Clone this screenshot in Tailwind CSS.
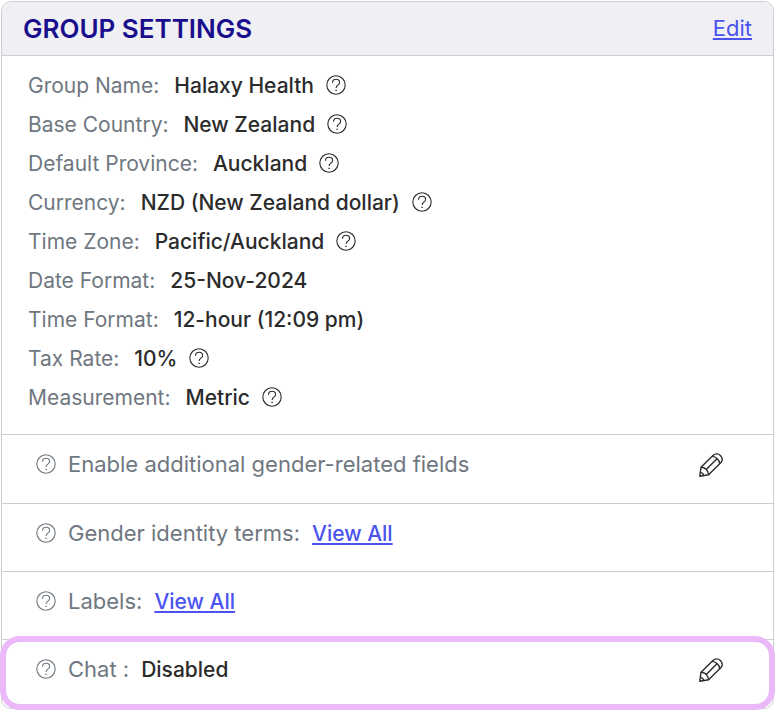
<!DOCTYPE html>
<html lang="en">
<head>
  <meta charset="UTF-8" />
  <meta name="viewport" content="width=device-width, initial-scale=1.0"/>
  <title>Group Settings</title>
  <script src="https://cdn.jsdelivr.net/npm/@tailwindcss/browser@4"></script>
</head>
<body class="bg-white text-[#6f777f] text-[21px] leading-[39px]" style="font-family: Inter, 'Liberation Sans', sans-serif;">

  <!-- shared icons -->
  <svg class="hidden">
    <symbol id="help" viewBox="0 0 20 20" fill="none" stroke="currentColor" stroke-width="1.1">
      <circle cx="10" cy="10" r="9.2"/>
      <path d="M6.5 7.7c0-2.100 1.500-3.500 3.600-3.500s3.500 1.400 3.500 3.200c0 2.800-3.500 2.700-3.500 5.500"/>
      <path d="M9.4 15.4h1.4" stroke-width="1.4"/>
    </symbol>
    <symbol id="pencil" viewBox="0 0 24 24" fill="none" stroke="currentColor" stroke-width="1.4" stroke-linejoin="round">
      <path d="M.8 23.2 2 14.2 14.2 2.200c1.800-1.800 5-1.900 7.200.2s2.300 5.400.6 7.200L9.600 21.800Z"/>
      <path d="M2 14.2c3.600-.2 7.400 3.400 7.600 7.600M13 3.400c4 .2 7.600 3.600 7.800 7.400M7.200 16.400 18.200 5.600"/>
      <path d="M1.300 19.400c1.700.2 3.100 1.600 3.400 3.200"/>
    </symbol>
  </svg>

  <main class="p-px">
    <section class="border border-[#cdced1] rounded-[10px]">
      <header class="flex items-center justify-between bg-[#f0eff4] border-b border-[#cdced1] rounded-t-[10px] h-[54px] px-[21px]">
        <h1 class="text-[#190f8c] text-[26px] font-semibold">GROUP SETTINGS</h1>
        <a href="#" class="text-[#4a53f0] text-[22px] underline">Edit</a>
      </header>

      <dl class="px-[26px] pt-[10px] pb-[17px]">
        <div class="flex items-center">
          <dt>Group Name:</dt>
          <dd class="flex items-center ml-[15px] gap-3 text-[#2b2b2b] font-medium">Halaxy Health <button aria-label="Help: group name"><svg class="size-5 mb-0.5"><use href="#help"/></svg></button></dd>
        </div>
        <div class="flex items-center">
          <dt>Base Country:</dt>
          <dd class="flex items-center ml-[15px] gap-3 text-[#2b2b2b] font-medium">New Zealand <button aria-label="Help: base country"><svg class="size-5 mb-0.5"><use href="#help"/></svg></button></dd>
        </div>
        <div class="flex items-center">
          <dt>Default Province:</dt>
          <dd class="flex items-center ml-[15px] gap-3 text-[#2b2b2b] font-medium">Auckland <button aria-label="Help: default province"><svg class="size-5 mb-0.5"><use href="#help"/></svg></button></dd>
        </div>
        <div class="flex items-center">
          <dt>Currency:</dt>
          <dd class="flex items-center ml-[15px] gap-3 text-[#2b2b2b] font-medium">NZD (New Zealand dollar) <button aria-label="Help: currency"><svg class="size-5 mb-0.5"><use href="#help"/></svg></button></dd>
        </div>
        <div class="flex items-center">
          <dt>Time Zone:</dt>
          <dd class="flex items-center ml-[15px] gap-3 text-[#2b2b2b] font-medium">Pacific/Auckland <button aria-label="Help: time zone"><svg class="size-5 mb-0.5"><use href="#help"/></svg></button></dd>
        </div>
        <div class="flex items-center">
          <dt>Date Format:</dt>
          <dd class="ml-[15px] text-[#2b2b2b] font-medium">25-Nov-2024</dd>
        </div>
        <div class="flex items-center">
          <dt>Time Format:</dt>
          <dd class="ml-[15px] text-[#2b2b2b] font-medium">12-hour (12:09 pm)</dd>
        </div>
        <div class="flex items-center">
          <dt>Tax Rate:</dt>
          <dd class="flex items-center ml-[15px] gap-3 text-[#2b2b2b] font-medium">10% <button aria-label="Help: tax rate"><svg class="size-5 mb-0.5"><use href="#help"/></svg></button></dd>
        </div>
        <div class="flex items-center">
          <dt>Measurement:</dt>
          <dd class="flex items-center ml-[15px] gap-3 text-[#2b2b2b] font-medium">Metric <button aria-label="Help: measurement"><svg class="size-5 mb-0.5"><use href="#help"/></svg></button></dd>
        </div>
      </dl>

      <div class="flex items-center border-t border-[#cdced1] pl-[34px] pr-[50px] pt-[10px] pb-[19px]">
        <button aria-label="Help: gender fields"><svg class="size-5 mb-0.5"><use href="#help"/></svg></button>
        <span class="ml-3 text-[22px]">Enable additional gender-related fields</span>
        <button class="ml-auto text-[#2b2b2b]" aria-label="Edit gender fields"><svg class="size-6"><use href="#pencil"/></svg></button>
      </div>

      <div class="flex items-center border-t border-[#cdced1] pl-[34px] pr-[50px] pt-[10px] pb-[18px]">
        <button aria-label="Help: gender identity terms"><svg class="size-5 mb-0.5"><use href="#help"/></svg></button>
        <span class="ml-3 text-[22px]">Gender identity terms:</span>
        <a href="#" class="ml-3 text-[#4a53f0] font-medium underline">View All</a>
      </div>

      <div class="flex items-center border-t border-[#cdced1] pl-[34px] pr-[50px] pt-[10px] pb-[18px]">
        <button aria-label="Help: labels"><svg class="size-5 mb-0.5"><use href="#help"/></svg></button>
        <span class="ml-3 text-[22px]">Labels:</span>
        <a href="#" class="ml-3 text-[#4a53f0] font-medium underline">View All</a>
      </div>

      <div class="relative flex items-center border-t border-[#cdced1] pl-[34px] pr-[50px] pt-[10px] pb-[19px]">
        <!-- highlight around the chat row -->
        <div class="absolute -inset-x-[2px] -top-1 -bottom-[2px] border-[6px] border-[#ebb9fa] rounded-[20px] pointer-events-none"></div>
        <button aria-label="Help: chat"><svg class="size-5 mb-0.5"><use href="#help"/></svg></button>
        <span class="ml-3 text-[22px]">Chat :</span>
        <span class="ml-3 text-[#2b2b2b] font-medium">Disabled</span>
        <button class="ml-auto text-[#2b2b2b]" aria-label="Edit chat"><svg class="size-6"><use href="#pencil"/></svg></button>
      </div>
    </section>
  </main>
</body>
</html>
